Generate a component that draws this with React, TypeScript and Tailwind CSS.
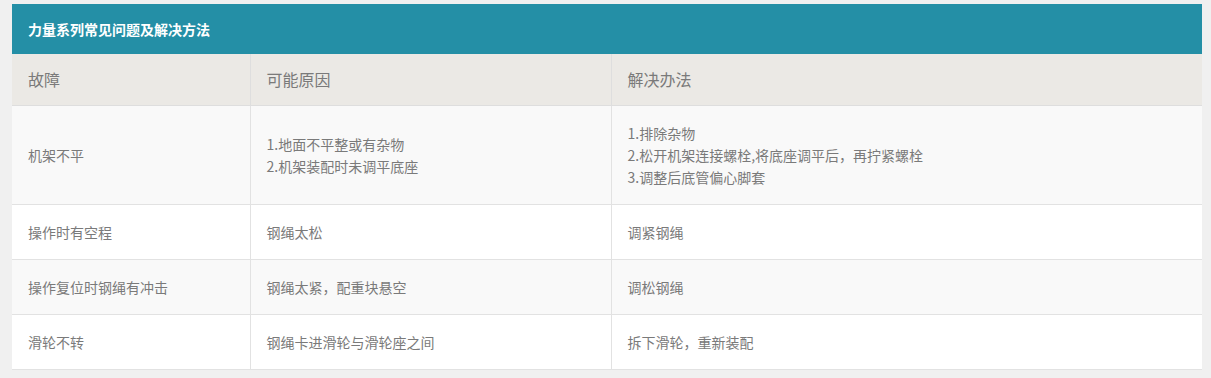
import React from "react";

const rows: { a: string; b: string[]; c: string[] }[] = [
  {
    a: "机架不平",
    b: ["1.地面不平整或有杂物", "2.机架装配时未调平底座"],
    c: ["1.排除杂物", "2.松开机架连接螺栓,将底座调平后，再拧紧螺栓", "3.调整后底管偏心脚套"],
  },
  { a: "操作时有空程", b: ["钢绳太松"], c: ["调紧钢绳"] },
  { a: "操作复位时钢绳有冲击", b: ["钢绳太紧，配重块悬空"], c: ["调松钢绳"] },
  { a: "滑轮不转", b: ["钢绳卡进滑轮与滑轮座之间"], c: ["拆下滑轮，重新装配"] },
];

export default function App() {
  return (
    <div
      className="w-[1211px] h-[378px] bg-[#f0f0f0] pt-[4px] pl-[12px]"
      style={{ fontFamily: '"Noto Sans CJK SC", "Noto Sans", sans-serif' }}
    >
      <div className="w-[1190px]">
        <div className="h-[50px] bg-[#248fa6] flex items-center px-[16px] text-white text-[14px] font-bold">
          力量系列常见问题及解决方法
        </div>
        <table className="w-[1190px] border-collapse table-fixed text-[#7a7a7a]">
          <colgroup>
            <col className="w-[238px]" />
            <col className="w-[361px]" />
            <col className="w-[591px]" />
          </colgroup>
          <thead>
            <tr className="bg-[#ebe9e5] h-[51px]">
              {["故障", "可能原因", "解决办法"].map((h, i) => (
                <th
                  key={h}
                  className={`text-left font-normal text-[16px] leading-[20px] px-[16px] py-0 border-b border-[#dedede] ${
                    i > 0 ? "border-l border-[#dedede]" : ""
                  }`}
                >
                  {h}
                </th>
              ))}
            </tr>
          </thead>
          <tbody className="text-[14px] leading-[22px]">
            {rows.map((r, idx) => (
              <tr key={idx} className={idx % 2 === 0 ? "bg-[#f9f9f9]" : "bg-white"}>
                <td className="px-[16px] py-[16px] border-b border-[#e2e2e2]">{r.a}</td>
                <td className="px-[16px] py-[16px] border-b border-l border-[#e2e2e2]">
                  {r.b.map((t) => (
                    <div key={t}>{t}</div>
                  ))}
                </td>
                <td className="px-[16px] py-[16px] border-b border-l border-[#e2e2e2]">
                  {r.c.map((t) => (
                    <div key={t}>{t}</div>
                  ))}
                </td>
              </tr>
            ))}
          </tbody>
        </table>
      </div>
    </div>
  );
}
